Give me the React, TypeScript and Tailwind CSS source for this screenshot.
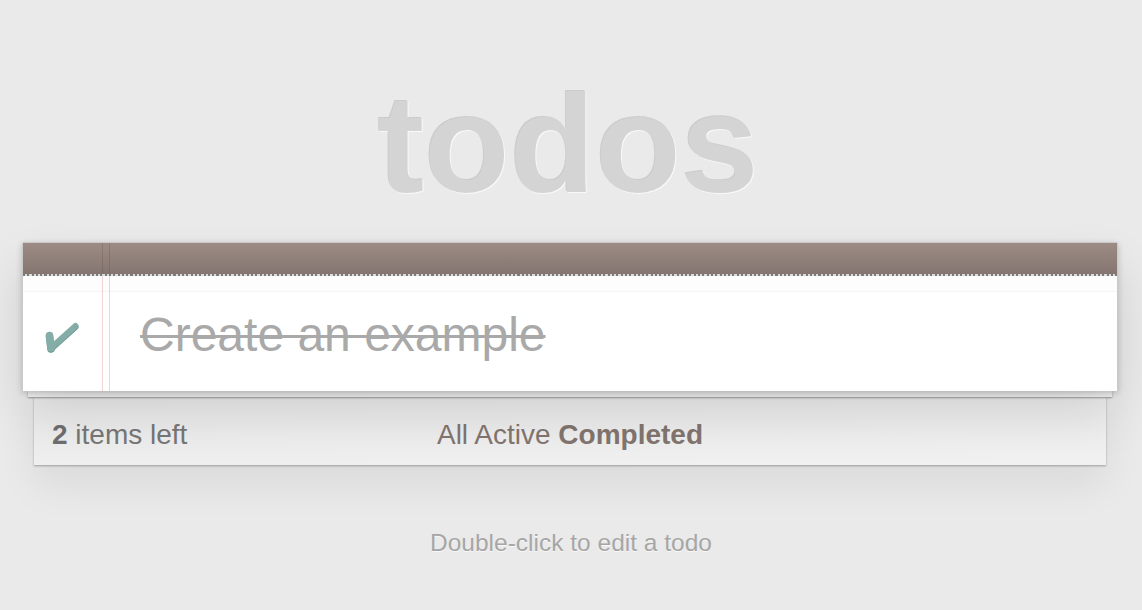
import React from "react";

function Check() {
  return (
    <svg width="36" height="34" viewBox="0 0 36 34" className="block">
      <g transform="translate(0,1)">
        <path d="M5.5 15.5 L7 28" stroke="#669991" strokeWidth="7.5" strokeLinecap="round" fill="none" />
        <path d="M7 28 L31.5 6" stroke="#669991" strokeWidth="6" strokeLinecap="round" fill="none" />
      </g>
      <path d="M5.5 15.5 L7 28" stroke="#85ada7" strokeWidth="7.5" strokeLinecap="round" fill="none" />
      <path d="M7 28 L31.5 6" stroke="#85ada7" strokeWidth="6" strokeLinecap="round" fill="none" />
    </svg>
  );
}

export default function App() {
  return (
    <div className="min-h-[610px] w-full bg-[#eaeaea] font-['Liberation_Sans',Arial,sans-serif] overflow-hidden">
      <h1 className="pt-[74px] pr-[6px] h-[211px] text-center text-[140px] leading-none font-bold text-[#d4d4d4] [text-shadow:-1px_-1px_0_rgba(0,0,0,0.13),1px_1px_0_rgba(255,255,255,0.7)]">
        todos
      </h1>

      <div className="mt-[31px] ml-[22px] mr-[24px]">
        <div className="relative z-10 bg-white border-t border-x border-[#c9c9c9] rounded-t-[2px] shadow-[0_2px_6px_0_rgba(0,0,0,0.2),0_25px_50px_0_rgba(0,0,0,0.12)]">
          <div className="h-[31px] bg-gradient-to-b from-[#9d8c85] to-[#857570]" />
          <div className="h-[2px] bg-[repeating-linear-gradient(90deg,#7a7a7a_0_2px,#dcdcdc_2px_4.3px)]" />
          <div className="h-[16px] bg-[#fdfdfd] border-b border-[#f5f5f5]" />
          <div className="flex h-[99px] bg-white">
            <div className="w-[78px] flex items-start justify-center pt-[28px]">
              <Check />
            </div>
            <div className="pl-[39px] pt-[14px] text-[48px] leading-[58px] text-[#a9a9a9] line-through decoration-[#a9a9a9] decoration-[3px]">
              Create an example
            </div>
          </div>
          <div className="absolute left-[79px] top-0 h-[31px] w-[7.5px] border-x-[1.5px] border-[rgba(110,80,70,0.3)]" />
          <div className="absolute left-[79px] top-[33px] bottom-0 w-[7.5px] border-x-[1.5px] border-[#f1d3d3]" />
        </div>
        <div className="relative z-[5] mx-[6px] h-[6px] bg-[#f7f7f7] shadow-[0_1px_2px_rgba(0,0,0,0.35)]" />
        <div className="relative z-0 mx-[12px] h-[68px] pt-[8px] grid grid-cols-[1fr_auto_1fr] items-center bg-gradient-to-br from-[#ececec] to-[#f1f1f1] shadow-[0_1px_2px_rgba(0,0,0,0.3),0_20px_40px_rgba(0,0,0,0.07)] text-[28px] leading-[32px]">
          <div className="pl-[18px] text-[#777]">
            <b className="font-bold text-[#6f6f6f]">2</b> items left
          </div>
          <div className="text-[#83756f] whitespace-nowrap">
            All Active <b className="font-bold">Completed</b>
          </div>
          <div />
        </div>
      </div>

      <p className="mt-[66px] text-center text-[24.5px] leading-none text-[#a6a6a6] [text-shadow:0_1px_0_rgba(255,255,255,0.7)]">
        Double-click to edit a todo
      </p>
    </div>
  );
}
